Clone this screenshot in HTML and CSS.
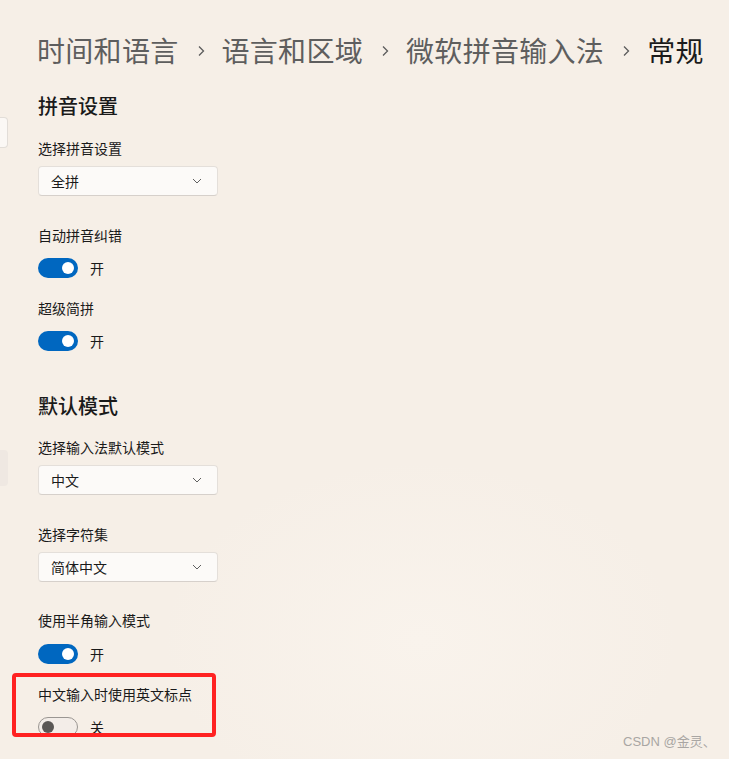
FILE: index.html
```html
<!DOCTYPE html>
<html lang="zh-CN">
<head>
<meta charset="utf-8">
<title>常规</title>
<link rel="stylesheet" href="styles.css">
</head>
<body>
<div class="page">
  <aside class="sidebar">
    <div class="side-item side-active"></div>
    <div class="side-item side-hover"></div>
  </aside>
  <main class="main">
    <nav class="crumb">
      <span class="crumb-link">时间和语言</span>
      <svg class="crumb-sep" viewBox="0 0 8 12" width="8" height="12"><path d="M2 1.5 L6.5 6 L2 10.5" fill="none" stroke="#5c5c5c" stroke-width="1.3"/></svg>
      <span class="crumb-link">语言和区域</span>
      <svg class="crumb-sep" viewBox="0 0 8 12" width="8" height="12"><path d="M2 1.5 L6.5 6 L2 10.5" fill="none" stroke="#5c5c5c" stroke-width="1.3"/></svg>
      <span class="crumb-link">微软拼音输入法</span>
      <svg class="crumb-sep" viewBox="0 0 8 12" width="8" height="12"><path d="M2 1.5 L6.5 6 L2 10.5" fill="none" stroke="#5c5c5c" stroke-width="1.3"/></svg>
      <span class="crumb-current">常规</span>
    </nav>

    <h2 class="section-title first">拼音设置</h2>
    <div class="label gap-18">选择拼音设置</div>
    <div class="select">
      <span>全拼</span>
      <svg class="select-chev" viewBox="0 0 10 6" width="10" height="6"><path d="M1 1 L5 5 L9 1" fill="none" stroke="#606060" stroke-width="1"/></svg>
    </div>

    <div class="label gap-29">自动拼音纠错</div>
    <div class="toggle-row">
      <span class="toggle on"><span class="knob"></span></span>
      <span class="toggle-text">开</span>
    </div>

    <div class="label gap-20">超级简拼</div>
    <div class="toggle-row">
      <span class="toggle on"><span class="knob"></span></span>
      <span class="toggle-text">开</span>
    </div>

    <h2 class="section-title gap-41">默认模式</h2>
    <div class="label gap-17">选择输入法默认模式</div>
    <div class="select">
      <span>中文</span>
      <svg class="select-chev" viewBox="0 0 10 6" width="10" height="6"><path d="M1 1 L5 5 L9 1" fill="none" stroke="#606060" stroke-width="1"/></svg>
    </div>

    <div class="label gap-29">选择字符集</div>
    <div class="select">
      <span>简体中文</span>
      <svg class="select-chev" viewBox="0 0 10 6" width="10" height="6"><path d="M1 1 L5 5 L9 1" fill="none" stroke="#606060" stroke-width="1"/></svg>
    </div>

    <div class="label gap-28">使用半角输入模式</div>
    <div class="toggle-row gap-14">
      <span class="toggle on"><span class="knob"></span></span>
      <span class="toggle-text">开</span>
    </div>

    <div class="label gap-20">中文输入时使用英文标点</div>
    <div class="toggle-row">
      <span class="toggle off"><span class="knob"></span></span>
      <span class="toggle-text">关</span>
    </div>
  </main>
</div>
<div class="highlight"></div>
<div class="watermark">CSDN @金灵、</div>
</body>
</html>
```
FILE: styles.css
```css
* { box-sizing: border-box; }
html, body {
  margin: 0;
  padding: 0;
  background: #f6efe7;
  font-family: "Noto Sans CJK SC", "Noto Sans", sans-serif;
  color: #1a1a1a;
}
body {
  width: 729px;
  height: 759px;
  overflow: hidden;
  position: relative;
  background: radial-gradient(ellipse 260px 180px at 420px 640px, #f9f3ec 0%, rgba(249,243,236,0) 100%), #f6efe7;
}
.page {
  display: grid;
  grid-template-columns: 8px 1fr;
  height: 739px;
  overflow: hidden;
}
.sidebar {
  display: flex;
  flex-direction: column;
}
.side-item {
  width: 8px;
  border-radius: 0 4px 4px 0;
}
.side-active {
  margin-top: 117px;
  height: 31px;
  background: #fbf8f5;
  border: 1px solid #e2ddd8;
  border-left: none;
}
.side-hover {
  margin-top: 302px;
  height: 36px;
  background: #efe8e2;
}
.main {
  padding-left: 30px;
}
.crumb {
  margin-top: 30px;
  height: 40px;
  display: flex;
  align-items: center;
  margin-left: -1px;
  font-size: 28px;
  line-height: 40px;
  white-space: nowrap;
}
.crumb-link { color: #5e5e5e; letter-spacing: 0.3px; }
.crumb-current { color: #1b1b1b; letter-spacing: 0.3px; }
.crumb-sep { margin: 2px 17px 0 18px; flex: none; }

.section-title {
  margin: 0;
  font-size: 20px;
  line-height: 28px;
  font-weight: 500;
  color: #1a1a1a;
}
.section-title.first { margin-top: 22px; }

.label {
  font-size: 14px;
  line-height: 20px;
  color: #1a1a1a;
}
.gap-17 { margin-top: 17px; }
.gap-18 { margin-top: 18px; }
.gap-20 { margin-top: 20px; }
.gap-28 { margin-top: 28px; }
.gap-29 { margin-top: 29px; }
.gap-41 { margin-top: 41px; }

.select {
  margin-top: 8px;
  width: 180px;
  height: 30px;
  display: flex;
  align-items: center;
  justify-content: space-between;
  padding: 0 15px 0 12px;
  background: #fcfaf8;
  border: 1px solid #e4dfda;
  border-bottom-color: #d6d0cb;
  border-radius: 4px;
  font-size: 14px;
  color: #1a1a1a;
}
.select-chev { flex: none; }

.toggle-row {
  margin-top: 13px;
  height: 20px;
  display: flex;
  align-items: center;
}
.toggle-row.gap-14 { margin-top: 14px; }
.toggle {
  width: 40px;
  height: 20px;
  border-radius: 10px;
  display: flex;
  align-items: center;
  flex: none;
}
.toggle.on {
  background: #0067c0;
  justify-content: flex-end;
  padding-right: 4px;
}
.toggle.on .knob {
  width: 12px;
  height: 12px;
  border-radius: 50%;
  background: #ffffff;
}
.toggle.off {
  background: #f3ede8;
  border: 1px solid #9a9692;
  justify-content: flex-start;
  padding-left: 3px;
}
.toggle.off .knob {
  width: 12px;
  height: 12px;
  border-radius: 50%;
  background: #5a5755;
}
.toggle-text {
  margin-left: 12px;
  font-size: 14px;
  line-height: 20px;
  color: #1a1a1a;
}

.highlight {
  position: absolute;
  left: 12px;
  top: 673px;
  width: 204px;
  height: 64px;
  border: 4px solid #ff2222;
  border-radius: 4px;
}
.watermark {
  position: absolute;
  left: 623px;
  top: 733px;
  font-family: "Liberation Sans", "Noto Sans CJK SC", sans-serif;
  font-size: 13px;
  line-height: 18px;
  color: #a9a6a3;
  white-space: nowrap;
}
```
